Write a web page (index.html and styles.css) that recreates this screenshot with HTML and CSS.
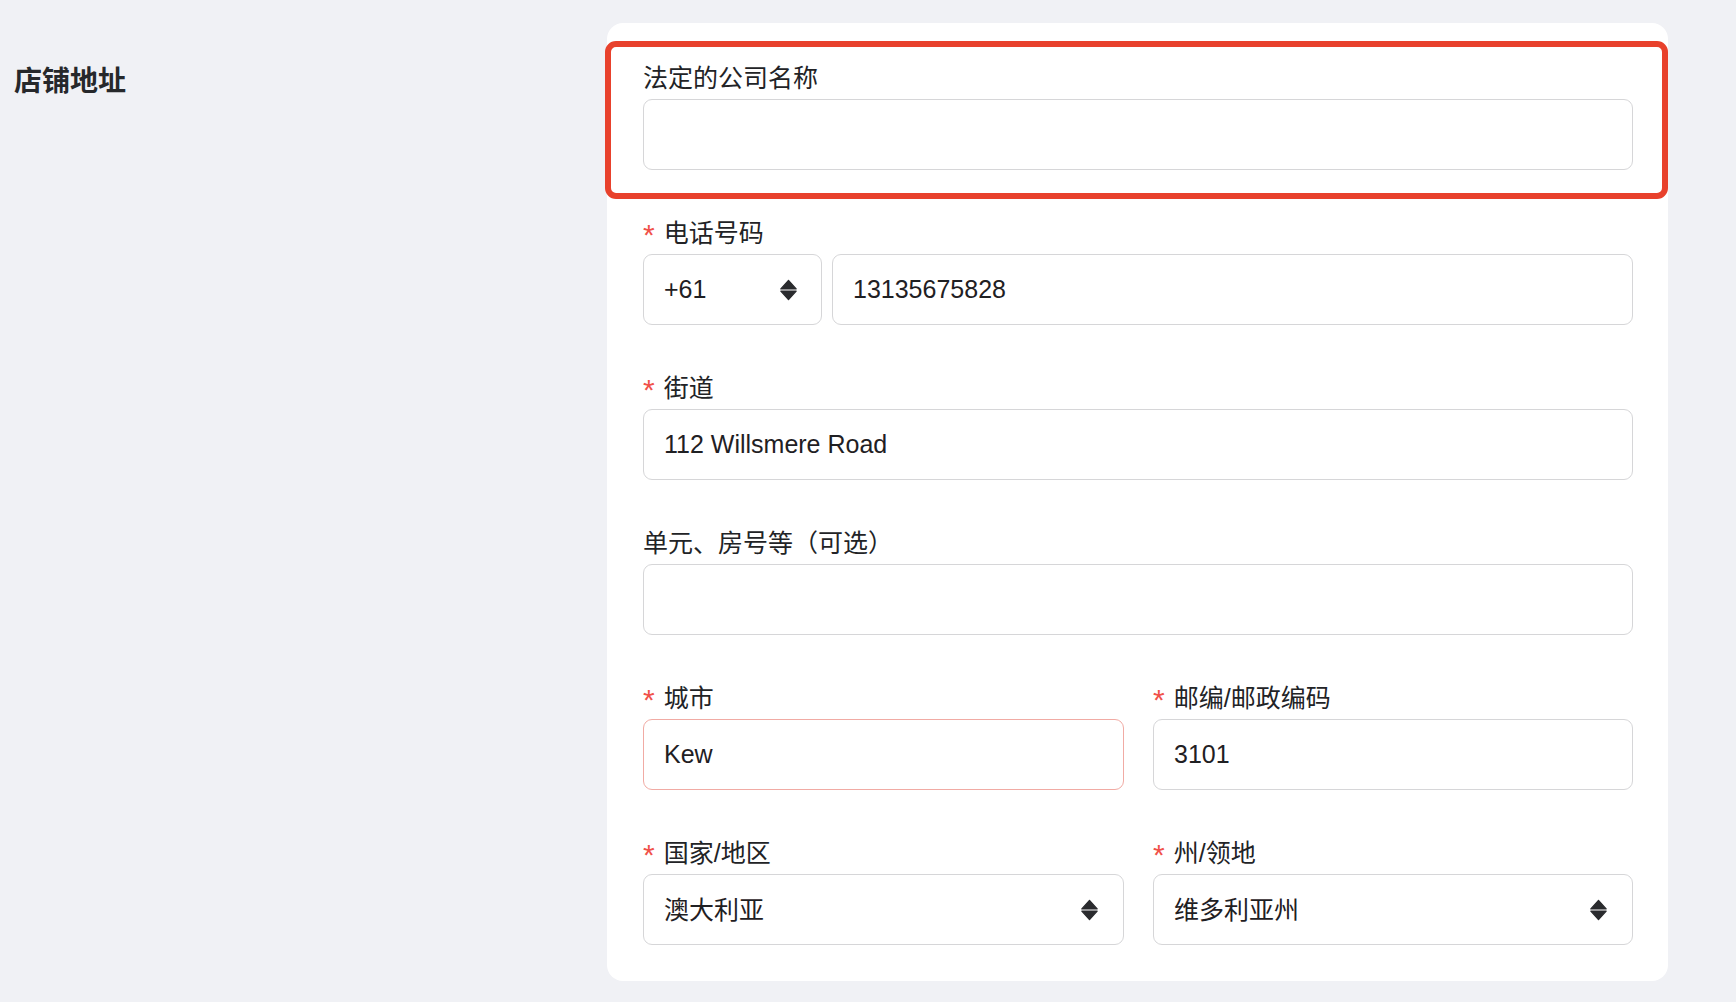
FILE: index.html
```html
<!DOCTYPE html>
<html lang="zh-CN">
<head>
<meta charset="utf-8">
<title>店铺地址</title>
<link rel="stylesheet" href="styles.css">
</head>
<body>
<div class="page">
  <aside class="side">
    <h2 class="title">店铺地址</h2>
  </aside>
  <section class="card">
    <div class="field highlight">
      <label class="label">法定的公司名称</label>
      <div class="input"></div>
    </div>

    <div class="field">
      <label class="label"><span class="req">*</span>电话号码</label>
      <div class="phone">
        <div class="input select"><span>+61</span>
          <svg class="arrows" viewBox="0 0 17 21" width="17" height="22"><path d="M8.5 0.8 L16.2 9.4 H0.8 Z" /><path d="M0.8 11.6 H16.2 L8.5 20.2 Z" /></svg>
        </div>
        <div class="input"><span>13135675828</span></div>
      </div>
    </div>

    <div class="field">
      <label class="label"><span class="req">*</span>街道</label>
      <div class="input"><span>112 Willsmere Road</span></div>
    </div>

    <div class="field">
      <label class="label">单元、房号等（可选）</label>
      <div class="input"></div>
    </div>

    <div class="row2">
      <div class="field">
        <label class="label"><span class="req">*</span>城市</label>
        <div class="input error"><span>Kew</span></div>
      </div>
      <div class="field">
        <label class="label"><span class="req">*</span>邮编/邮政编码</label>
        <div class="input"><span>3101</span></div>
      </div>
    </div>

    <div class="row2">
      <div class="field">
        <label class="label"><span class="req">*</span>国家/地区</label>
        <div class="input select wide"><span class="cjk">澳大利亚</span>
          <svg class="arrows" viewBox="0 0 17 21" width="17" height="22"><path d="M8.5 0.8 L16.2 9.4 H0.8 Z" /><path d="M0.8 11.6 H16.2 L8.5 20.2 Z" /></svg>
        </div>
      </div>
      <div class="field">
        <label class="label"><span class="req">*</span>州/领地</label>
        <div class="input select wide"><span class="cjk">维多利亚州</span>
          <svg class="arrows" viewBox="0 0 17 21" width="17" height="22"><path d="M8.5 0.8 L16.2 9.4 H0.8 Z" /><path d="M0.8 11.6 H16.2 L8.5 20.2 Z" /></svg>
        </div>
      </div>
    </div>
  </section>
</div>
</body>
</html>
```

FILE: styles.css
```css
* {
  box-sizing: border-box;
}

html, body {
  margin: 0;
  padding: 0;
  background: #f0f1f5;
}

body {
  font-family: "Liberation Sans", "Noto Sans CJK SC", sans-serif;
  color: #222326;
  width: 1736px;
  height: 1002px;
  overflow: hidden;
}

.page {
  display: flex;
  align-items: flex-start;
  padding-top: 23px;
}

.side {
  flex: 0 0 607px;
}

.title {
  margin: 39px 0 0 14px;
  font-size: 28px;
  line-height: 40px;
  font-weight: 700;
  color: #26282b;
}

.card {
  flex: 0 0 1061px;
  background: #ffffff;
  border-radius: 16px;
  padding: 18px 35px 36px 36px;
  display: flex;
  flex-direction: column;
}

.field {
  display: flex;
  flex-direction: column;
}

.card > .field,
.card > .row2 {
  margin-top: 46px;
}

.card > .highlight {
  margin-top: 0;
  margin-left: -38px;
  margin-right: -35px;
  border: 6px solid #e8412c;
  border-radius: 11px;
  padding: 14px 29px 23px 32px;
}

.card > .highlight + .field {
  margin-top: 17px;
}

.label {
  display: block;
  height: 34px;
  font-size: 25px;
  line-height: 34px;
  margin-bottom: 4px;
  color: #222326;
  white-space: nowrap;
  overflow: visible;
}

.req {
  color: #f0514a;
  font-size: 30px;
  line-height: 1;
  margin-right: 9px;
  position: relative;
  top: 3px;
}

.input {
  height: 71px;
  border: 1px solid #d6d6d8;
  border-radius: 9px;
  padding: 0 20px;
  display: flex;
  align-items: center;
  font-size: 25px;
  color: #1f2023;
  background: #fff;
}

.cjk {
  font-family: "Noto Sans CJK SC", sans-serif;
  line-height: 1.2;
  padding-bottom: 4px;
}

.input.error {
  border-color: #f1aba4;
}

.select {
  padding-right: 24px;
}

.select.wide {
  padding-right: 25px;
}

.arrows {
  margin-left: auto;
  flex: none;
  fill: #2a2b2e;
  stroke: #2a2b2e;
  stroke-width: 1.2;
  stroke-linejoin: round;
}

.phone {
  display: grid;
  grid-template-columns: 179px 1fr;
  column-gap: 10px;
}

.row2 {
  display: grid;
  grid-template-columns: 481px 1fr;
  column-gap: 29px;
}
```
